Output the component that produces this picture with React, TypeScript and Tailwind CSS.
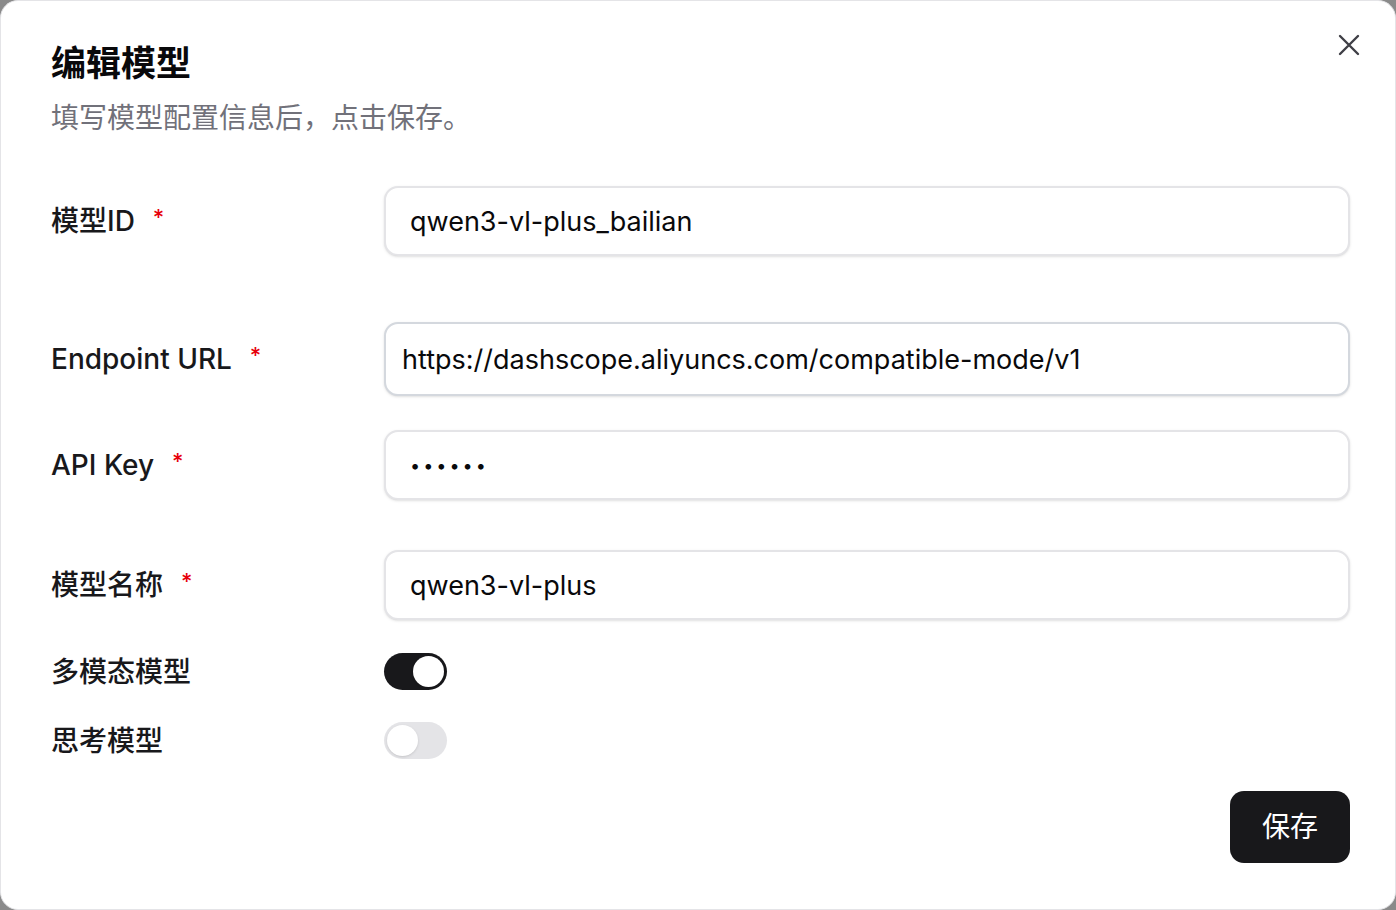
import { useState } from 'react'

const font = { fontFamily: '"Inter", "Noto Sans CJK SC", sans-serif' }

function Label({ text, required }: { text: string; required?: boolean }) {
  return (
    <div className="w-[333px] shrink-0 flex items-center text-[28px] leading-none font-medium text-[#18181b]">
      <span>{text}</span>
      {required && <span className="ml-[18px] text-[22px] text-[#e7000b] -mt-2">*</span>}
    </div>
  )
}

function Field({ value, type = 'text', pad = 'px-[24px]', border = 'border-[#e4e4e7]', h = 'h-[70px]' }: { value: string; type?: string; pad?: string; border?: string; h?: string }) {
  const [v, setV] = useState(value)
  const size = type === 'password' ? 'text-[18px] tracking-[3px]' : 'text-[27px]'
  return (
    <input
      type={type}
      value={v}
      onChange={(e) => setV(e.target.value)}
      className={`flex-1 ${h} ${pad} rounded-[14px] border-2 ${border} bg-white ${size} text-[#09090b] shadow-sm outline-none`}
      style={font}
    />
  )
}

function Toggle({ on }: { on: boolean }) {
  const [checked, setChecked] = useState(on)
  return (
    <button
      onClick={() => setChecked(!checked)}
      className={`w-[63px] h-[37px] rounded-full p-[3px] flex items-center ${checked ? 'bg-[#18181b] justify-end' : 'bg-[#e4e4e7] justify-start'}`}
    >
      <span className="w-[31px] h-[31px] rounded-full bg-white shadow" />
    </button>
  )
}

export default function App() {
  return (
    <div className="w-full h-[910px] bg-[#8a8a8a]" style={font}>
      <div className="relative w-full h-full bg-white rounded-[18px] border border-[#e4e4e7] pl-[50px] pr-[45px] pt-[38px]">
        <button className="absolute right-[34px] top-[32px] text-[#3f3f46]">
          <svg width="24" height="24" viewBox="0 0 24 24" fill="none" stroke="currentColor" strokeWidth="2.4" strokeLinecap="round">
            <path d="M3 3l18 18M21 3L3 21" />
          </svg>
        </button>

        <h2 className="text-[35px] font-bold leading-[48px] text-[#09090b]">编辑模型</h2>
        <p className="mt-[11px] text-[28px] leading-[40px] text-[#71717a]">填写模型配置信息后，点击保存。</p>

        <div className="mt-[48px] flex items-center">
          <Label text="模型ID" required />
          <Field value="qwen3-vl-plus_bailian" />
        </div>

        <div className="mt-[66px] flex items-center">
          <Label text="Endpoint URL" required />
          <Field value="https://dashscope.aliyuncs.com/compatible-mode/v1" pad="px-[16px]" border="border-[#d4d8de]" h="h-[74px]" />
        </div>

        <div className="mt-[34px] flex items-center">
          <Label text="API Key" required />
          <Field value="123456" type="password" />
        </div>

        <div className="mt-[50px] flex items-center">
          <Label text="模型名称" required />
          <Field value="qwen3-vl-plus" />
        </div>

        <div className="mt-[33px] flex items-center">
          <Label text="多模态模型" />
          <Toggle on={true} />
        </div>

        <div className="mt-[32px] flex items-center">
          <Label text="思考模型" />
          <Toggle on={false} />
        </div>

        <div className="mt-[32px] flex justify-end">
          <button className="w-[120px] h-[72px] rounded-[14px] bg-[#18181b] text-white text-[28px]">保存</button>
        </div>
      </div>
    </div>
  )
}
